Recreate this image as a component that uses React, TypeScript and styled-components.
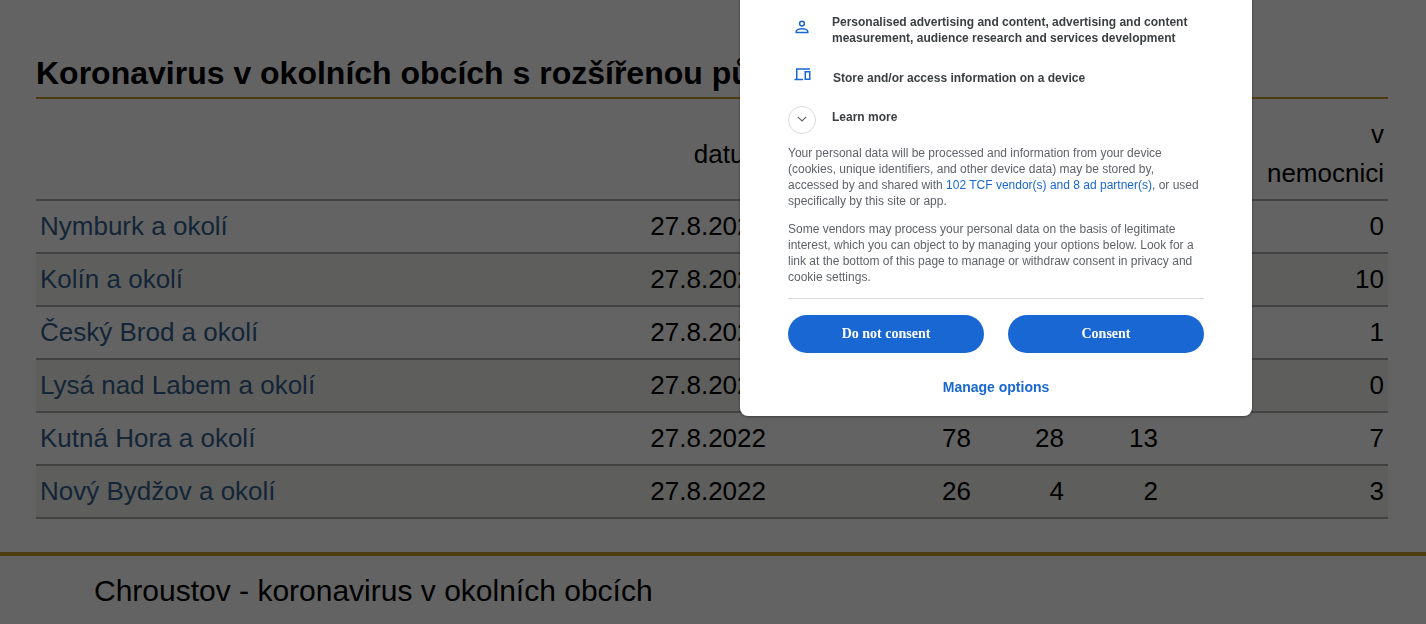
import React from "react";
import styled, { createGlobalStyle } from "styled-components";

const Global = createGlobalStyle`
  html, body { margin: 0; padding: 0; background: #fff; overflow: hidden; }
  body { font-family: "Liberation Sans", Arial, sans-serif; color: #000; }
`;

const Page = styled.div`
  height: 624px;
  overflow: hidden;
  padding-top: 50px;
  box-sizing: border-box;
`;
const Section = styled.section`
  margin: 0 38px 0 36px;
`;
const Heading = styled.h2`
  margin: 0;
  font-size: 32px;
  line-height: 47px;
  font-weight: 700;
  border-bottom: 2px solid #c49a2a;
  white-space: nowrap;
`;
const Table = styled.table`
  width: 100%;
  margin-top: 10px;
  border-collapse: collapse;
  table-layout: fixed;
  font-size: 26px;
  line-height: 39px;
`;
const HeadCell = styled.th`
  font-weight: 400;
  text-align: right;
  vertical-align: middle;
  padding: 6px 4px;
  border-bottom: 2px solid #aaa;
`;
const Row = styled.tr<{ $tinted: boolean }>`
  background: ${(p) => (p.$tinted ? "#f3f3ec" : "transparent")};
`;
const Cell = styled.td`
  text-align: right;
  padding: 6px 4px;
  border-bottom: 2px solid #aaa;
  white-space: nowrap;
`;
const NameCell = styled(Cell)`
  text-align: left;
`;
const PlaceLink = styled.a`
  color: #355f90;
  text-decoration: none;
`;
const Rule = styled.hr`
  margin: 33px 0 0;
  border: 0;
  height: 4px;
  background: #c49a2a;
`;
const Subheading = styled.h3`
  margin: 17px 0 0 94px;
  font-size: 30px;
  line-height: 36px;
  font-weight: 400;
  white-space: nowrap;
`;

const Overlay = styled.div`
  position: fixed;
  inset: 0;
  background: rgba(0, 0, 0, 0.61);
`;
const Dialog = styled.div`
  position: fixed;
  left: 740px;
  top: -40px;
  width: 512px;
  height: 456px;
  box-sizing: border-box;
  background: #fff;
  border-radius: 8px;
  box-shadow: 0 1px 3px rgba(0, 0, 0, 0.4);
  padding: 0 48px;
  display: flex;
  flex-direction: column;
  justify-content: flex-end;
  overflow: hidden;
`;
const Purpose = styled.div<{ $gap: number }>`
  display: flex;
  align-items: center;
  margin-bottom: ${(p) => p.$gap}px;
`;
const IconSlot = styled.div`
  width: 28px;
  height: 20px;
  margin-bottom: 7px;
  flex: none;
  display: flex;
  align-items: center;
  justify-content: center;
  color: #1967d2;
`;
const PurposeText = styled.div<{ $indent: number }>`
  margin-left: ${(p) => p.$indent}px;
  font-size: 12px;
  line-height: 16px;
  font-weight: 700;
  color: #3c4043;
`;
const Expand = styled.div`
  width: 28px;
  height: 28px;
  box-sizing: border-box;
  flex: none;
  border: 1px solid #dadce0;
  border-radius: 50%;
  padding-bottom: 3px;
  display: flex;
  align-items: center;
  justify-content: center;
  color: #5f6368;
`;
const LearnRow = styled.div`
  display: flex;
  align-items: flex-start;
  height: 28px;
  margin-bottom: 11px;
`;
const LearnLabel = styled(PurposeText)`
  margin-top: 3px;
`;
const Para = styled.p`
  margin: 0 0 12px;
  font-size: 12px;
  line-height: 16px;
  color: #5f6368;
  &:last-of-type {
    margin-bottom: 13px;
  }
`;
const VendorLink = styled.a`
  color: #1967d2;
  text-decoration: none;
`;
const Divider = styled.div`
  height: 1px;
  background: #dadce0;
`;
const Buttons = styled.div`
  display: flex;
  gap: 24px;
  margin-top: 16px;
`;
const ConsentButton = styled.button`
  flex: 1;
  height: 38px;
  border: 0;
  border-radius: 19px;
  background: #1967d2;
  color: #fff;
  font-family: "Liberation Serif", "Times New Roman", serif;
  font-size: 14px;
  font-weight: 700;
  padding: 0;
`;
const Manage = styled.div`
  margin: 26px 0 21px;
  text-align: center;
  font-size: 14px;
  line-height: 16px;
  font-weight: 700;
  color: #1967d2;
`;

const PersonIcon = () => (
  <svg width="14" height="14" viewBox="0 0 14 14" fill="none" stroke="currentColor" strokeWidth="1.5">
    <circle cx="7" cy="3.6" r="2.4" />
    <path d="M1.2 12.6h11.6v-1c0-1.8-3.3-2.8-5.8-2.8s-5.8 1-5.8 2.8z" />
  </svg>
);
const DeviceIcon = () => (
  <svg width="17" height="13" viewBox="0 0 17 13" fill="none" stroke="currentColor" strokeWidth="1.5">
    <path d="M16 1H2.75v10" />
    <path d="M0.5 11.5h8.5" />
    <rect x="11.25" y="3.75" width="4.5" height="7.5" />
  </svg>
);
const ChevronIcon = () => (
  <svg width="10" height="6" viewBox="0 0 10 6" fill="none" stroke="currentColor" strokeWidth="1.1">
    <path d="M0.8 0.8L5 5l4.2-4.2" />
  </svg>
);

const rows: [string, string, string, string, string, string][] = [
  ["Nymburk a okolí", "27.8.2022", "", "", "", "0"],
  ["Kolín a okolí", "27.8.2022", "", "", "", "10"],
  ["Český Brod a okolí", "27.8.2022", "", "", "", "1"],
  ["Lysá nad Labem a okolí", "27.8.2022", "", "", "", "0"],
  ["Kutná Hora a okolí", "27.8.2022", "78", "28", "13", "7"],
  ["Nový Bydžov a okolí", "27.8.2022", "26", "4", "2", "3"],
];

export default function App() {
  return (
    <>
      <Global />
      <Page>
        <Section>
          <Heading>Koronavirus v okolních obcích s rozšířenou působností</Heading>
          <Table>
            <colgroup>
              <col style={{ width: 600 }} />
              <col style={{ width: 134 }} />
              <col style={{ width: 205 }} />
              <col style={{ width: 93 }} />
              <col style={{ width: 94 }} />
              <col style={{ width: 226 }} />
            </colgroup>
            <thead>
              <tr>
                <HeadCell />
                <HeadCell>datum</HeadCell>
                <HeadCell />
                <HeadCell />
                <HeadCell />
                <HeadCell>
                  v<br />
                  nemocnici
                </HeadCell>
              </tr>
            </thead>
            <tbody>
              {rows.map((r, i) => (
                <Row key={r[0]} $tinted={i % 2 === 1}>
                  <NameCell>
                    <PlaceLink href="#">{r[0]}</PlaceLink>
                  </NameCell>
                  {r.slice(1).map((v, j) => (
                    <Cell key={j}>{v}</Cell>
                  ))}
                </Row>
              ))}
            </tbody>
          </Table>
        </Section>
        <Rule />
        <Subheading>Chroustov - koronavirus v okolních obcích</Subheading>
      </Page>
      <Overlay />
      <Dialog>
        <Purpose $gap={18}>
          <IconSlot>
            <PersonIcon />
          </IconSlot>
          <PurposeText $indent={16}>
            Personalised advertising and content, advertising and content
            <br />
            measurement, audience research and services development
          </PurposeText>
        </Purpose>
        <Purpose $gap={15}>
          <IconSlot>
            <DeviceIcon />
          </IconSlot>
          <PurposeText $indent={17}>Store and/or access information on a device</PurposeText>
        </Purpose>
        <LearnRow>
          <Expand>
            <ChevronIcon />
          </Expand>
          <LearnLabel $indent={16}>Learn more</LearnLabel>
        </LearnRow>
        <Para>
          Your personal data will be processed and information from your device
          <br />
          (cookies, unique identifiers, and other device data) may be stored by,
          <br />
          accessed by and shared with <VendorLink href="#">102 TCF vendor(s) and 8 ad partner(s)</VendorLink>, or used
          <br />
          specifically by this site or app.
        </Para>
        <Para>
          Some vendors may process your personal data on the basis of legitimate
          <br />
          interest, which you can object to by managing your options below. Look for a
          <br />
          link at the bottom of this page to manage or withdraw consent in privacy and
          <br />
          cookie settings.
        </Para>
        <Divider />
        <Buttons>
          <ConsentButton>Do not consent</ConsentButton>
          <ConsentButton>Consent</ConsentButton>
        </Buttons>
        <Manage>Manage options</Manage>
      </Dialog>
    </>
  );
}
